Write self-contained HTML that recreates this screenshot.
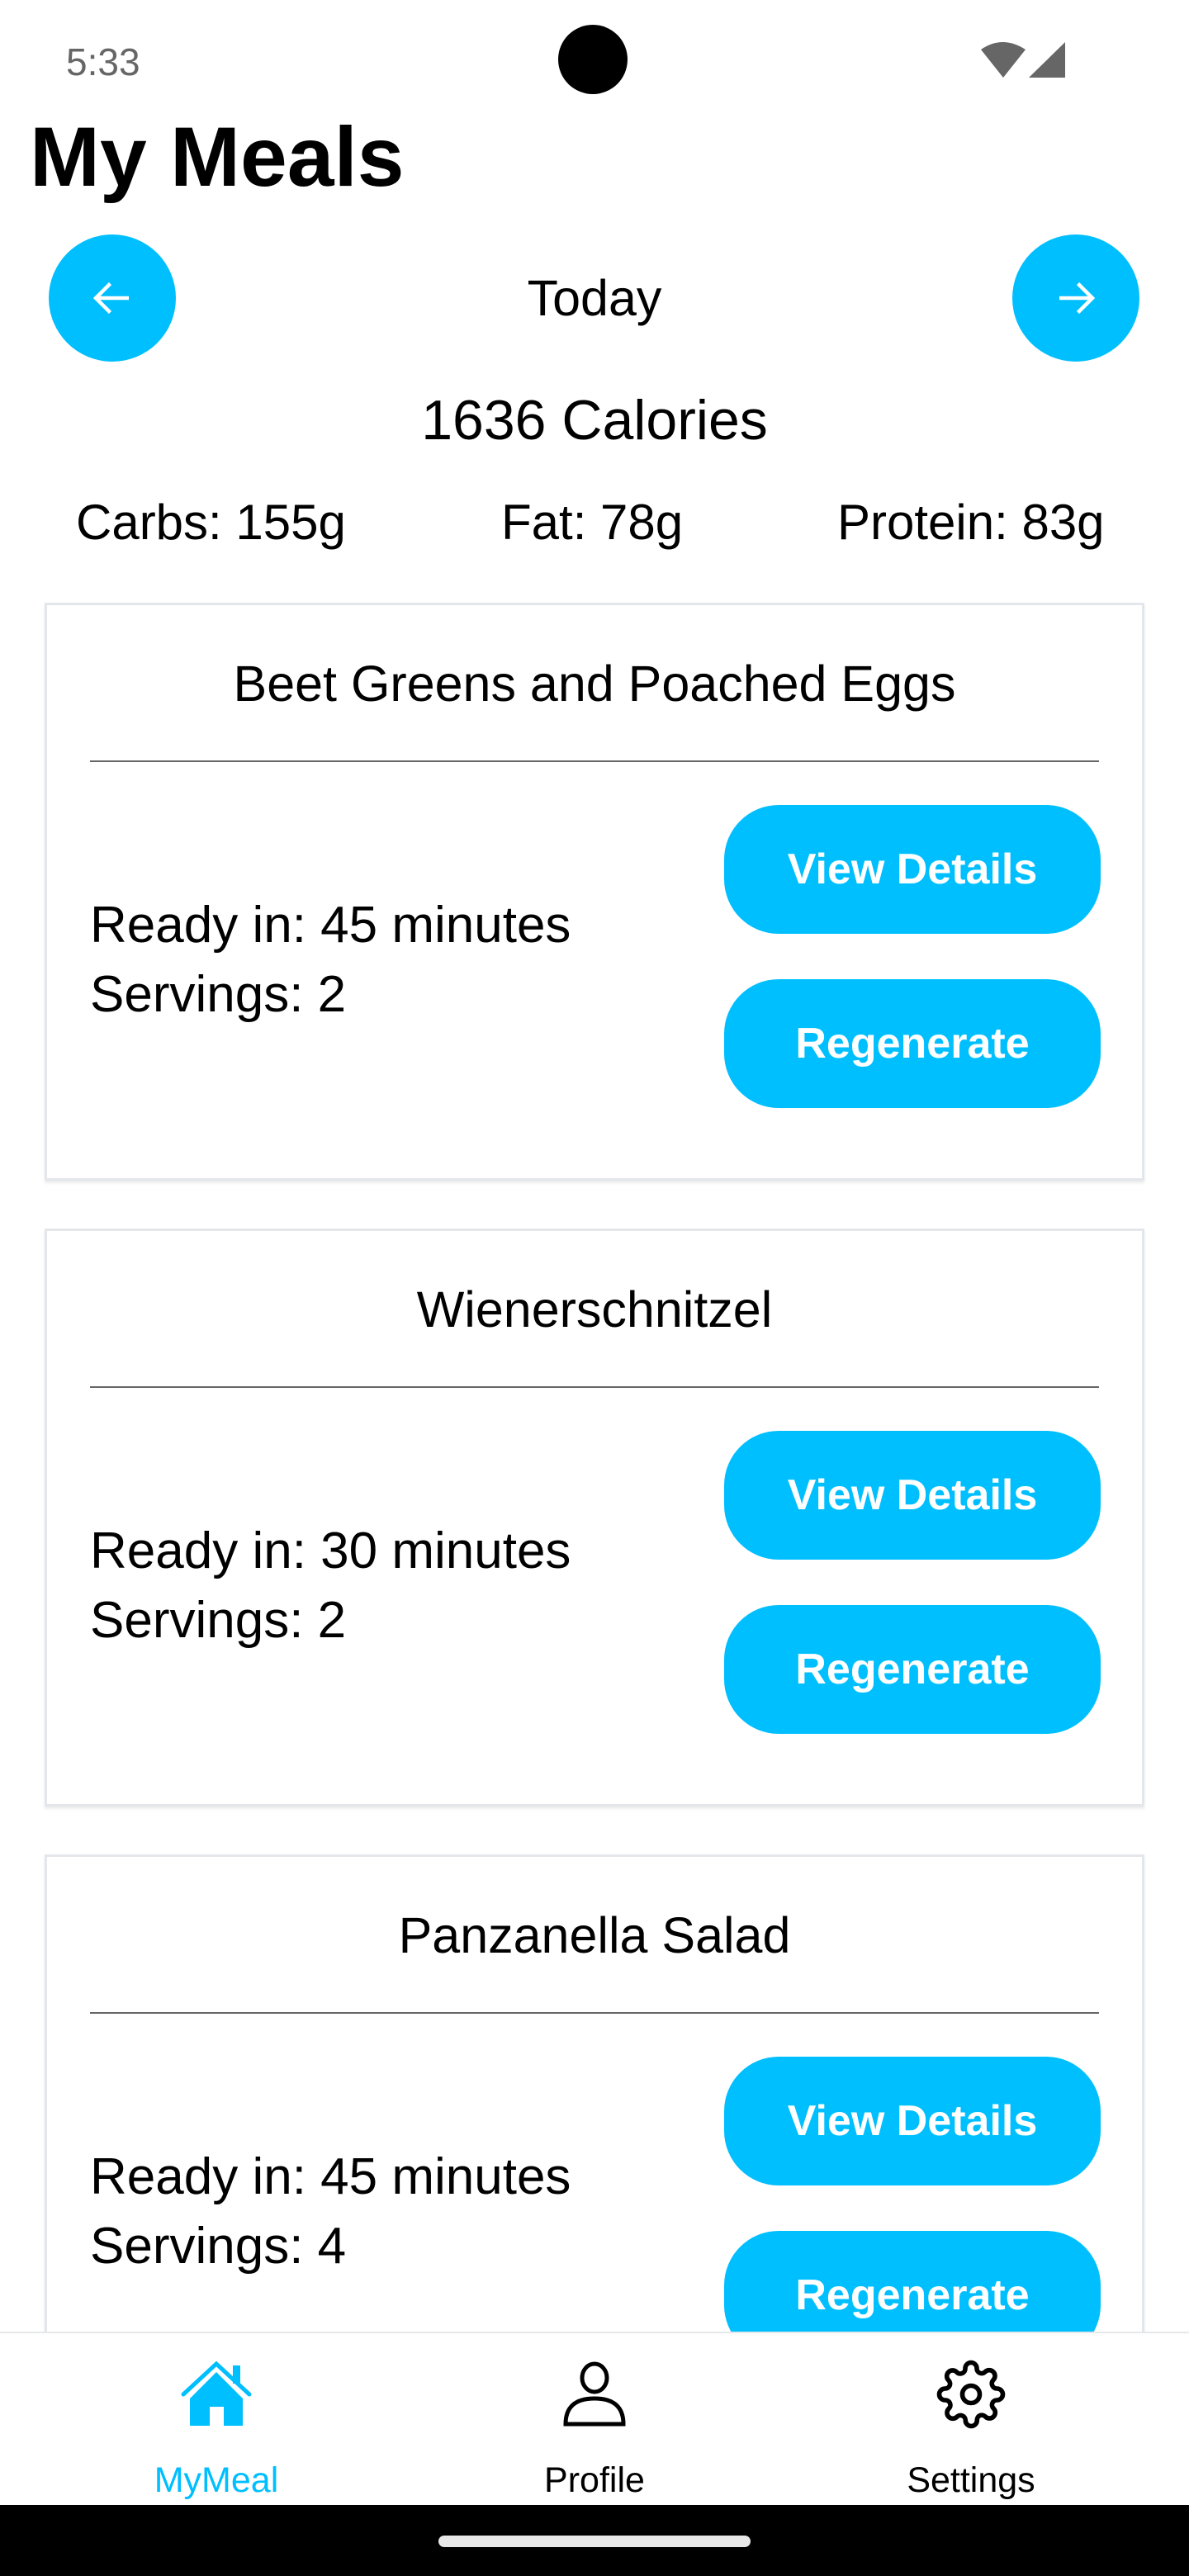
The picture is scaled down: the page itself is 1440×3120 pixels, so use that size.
<!DOCTYPE html>
<html><head><meta charset="utf-8"><style>
*{margin:0;padding:0;box-sizing:border-box}
html,body{width:1440px;height:3120px;overflow:hidden;background:#fff;font-family:"Liberation Sans",sans-serif;color:#000}
.abs{position:absolute}
.c{text-align:center;white-space:nowrap}
.circ{position:absolute;width:154px;height:154px;border-radius:50%;background:#00BFFF}
.card{position:absolute;left:54px;width:1332px;height:700px;border:3px solid #e3e6ea;background:#fff;box-shadow:0 3px 3px rgba(0,0,0,.08)}
.card .t{position:absolute;left:0;right:0;top:60px;font-size:61px;text-align:center}
.card .hr{position:absolute;left:52px;right:52px;top:188px;height:2px;background:#666}
.card .r{position:absolute;left:52px;font-size:62px;white-space:nowrap}
.btn{position:absolute;left:820px;width:456px;height:156px;border-radius:66px;background:#00BFFF;color:#fff;font-weight:bold;font-size:52px;text-align:center;line-height:156px}
</style></head><body>
<div class="abs" style="left:80px;top:48px;font-size:46px;color:#666">5:33</div>
<div class="abs" style="left:676px;top:30px;width:84px;height:84px;border-radius:50%;background:#000"></div>
<svg class="abs" style="left:1186px;top:48px" width="108" height="48" viewBox="0 0 108 48">
<path d="M2 12 Q28 -6 56 12 L29 46 Z" fill="#666"/>
<path d="M104 3 L104 46 L60 46 Z" fill="#666"/>
</svg>
<div class="abs" style="left:36px;top:132px;font-size:102px;font-weight:bold">My Meals</div>
<div class="circ" style="left:59px;top:284px"></div>
<div class="circ" style="left:1226px;top:284px"></div>
<svg class="abs" style="left:106px;top:331px" width="60" height="60" viewBox="0 0 24 24"><path d="M20 12H5M11 5l-7 7 7 7" stroke="#fff" stroke-width="1.8" fill="none"/></svg>
<svg class="abs" style="left:1273px;top:331px" width="60" height="60" viewBox="0 0 24 24"><path d="M4 12h15M13 5l7 7-7 7" stroke="#fff" stroke-width="1.8" fill="none"/></svg>
<div class="abs c" style="left:0;width:1440px;top:326px;font-size:61px">Today</div>
<div class="abs c" style="left:0;width:1440px;top:470px;font-size:68px">1636 Calories</div>
<div class="abs" style="left:92px;top:598px;font-size:60px;white-space:nowrap">Carbs: 155g</div>
<div class="abs" style="left:607px;top:598px;font-size:60px;white-space:nowrap">Fat: 78g</div>
<div class="abs" style="left:1014px;top:598px;font-size:60px;white-space:nowrap">Protein: 83g</div>
<div class="card" style="top:730px"><div class="t">Beet Greens and Poached Eggs</div><div class="hr"></div>
<div class="r" style="top:352px">Ready in: 45 minutes</div><div class="r" style="top:436px">Servings: 2</div>
<div class="btn" style="top:242px">View Details</div><div class="btn" style="top:453px">Regenerate</div></div>
<div class="card" style="top:1488px"><div class="t">Wienerschnitzel</div><div class="hr"></div>
<div class="r" style="top:352px">Ready in: 30 minutes</div><div class="r" style="top:436px">Servings: 2</div>
<div class="btn" style="top:242px">View Details</div><div class="btn" style="top:453px">Regenerate</div></div>
<div class="card" style="top:2246px"><div class="t">Panzanella Salad</div><div class="hr"></div>
<div class="r" style="top:352px">Ready in: 45 minutes</div><div class="r" style="top:436px">Servings: 4</div>
<div class="btn" style="top:242px">View Details</div><div class="btn" style="top:453px">Regenerate</div></div>
<div class="abs" style="left:0;top:2824px;width:1440px;height:210px;background:#fff;border-top:2px solid #e6e8ea"></div>
<svg class="abs" style="left:218px;top:2860px" width="90" height="80" viewBox="0 0 90 80">
<path d="M4 40 L44 3 L84 40" stroke="#00BFFF" stroke-width="5" fill="none" stroke-linecap="round"/>
<rect x="64" y="5" width="9" height="22" fill="#00BFFF"/>
<path d="M12 45 L44 13 L76 45 L76 78 L53 78 L53 55 L36 55 L36 78 L12 78 Z" fill="#00BFFF"/>
</svg>
<svg class="abs" style="left:680px;top:2860px" width="80" height="80" viewBox="0 0 80 80">
<ellipse cx="40" cy="20" rx="15" ry="17" stroke="#000" stroke-width="5" fill="none"/>
<path d="M5 76 Q5 45 40 45 Q75 45 75 76 Z" stroke="#000" stroke-width="5" fill="none"/>
</svg>
<svg class="abs" style="left:1134px;top:2858px" width="84" height="84" viewBox="0 0 24 24">
<path d="M12 15a3 3 0 1 0 0-6 3 3 0 0 0 0 6z" stroke="#000" stroke-width="1.6" fill="none"/>
<path d="M19.4 15a1.65 1.65 0 0 0 .33 1.820l.06.06a2 2 0 1 1-2.830 2.830l-.06-.06a1.65 1.65 0 0 0-1.820-.33 1.65 1.65 0 0 0-1 1.510V21a2 2 0 1 1-4 0v-.09A1.65 1.65 0 0 0 9 19.4a1.65 1.65 0 0 0-1.820.33l-.06.06a2 2 0 1 1-2.830-2.830l.06-.06A1.65 1.65 0 0 0 4.680 15a1.65 1.65 0 0 0-1.510-1H3a2 2 0 1 1 0-4h.09A1.65 1.65 0 0 0 4.6 9a1.65 1.65 0 0 0-.33-1.820l-.06-.06a2 2 0 1 1 2.830-2.830l.06.06A1.65 1.65 0 0 0 9 4.680 1.65 1.65 0 0 0 10 3.170V3a2 2 0 1 1 4 0v.09a1.65 1.65 0 0 0 1 1.510 1.65 1.65 0 0 0 1.820-.33l.06-.06a2 2 0 1 1 2.830 2.830l-.06.06A1.65 1.65 0 0 0 19.4 9a1.65 1.65 0 0 0 1.510 1H21a2 2 0 1 1 0 4h-.09a1.65 1.65 0 0 0-1.510 1z" stroke="#000" stroke-width="1.6" fill="none"/>
</svg>
<div class="abs c" style="left:162px;width:200px;top:2980px;font-size:43px;color:#00BFFF">MyMeal</div>
<div class="abs c" style="left:620px;width:200px;top:2980px;font-size:43px">Profile</div>
<div class="abs c" style="left:1076px;width:200px;top:2980px;font-size:43px">Settings</div>
<div class="abs" style="left:0;top:3034px;width:1440px;height:86px;background:#000"></div>
<div class="abs" style="left:531px;top:3071px;width:378px;height:14px;border-radius:7px;background:#e8e8e8"></div>
</body></html>
